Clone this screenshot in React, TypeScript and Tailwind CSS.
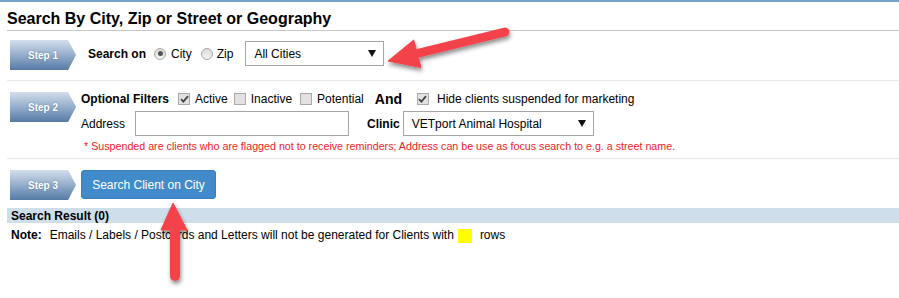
import type { ReactNode } from 'react';

function StepBadge({ label }: { label: string }) {
  return (
    <div
      className="w-[66px] h-[30px] shrink-0 flex items-center justify-center bg-gradient-to-b from-[#d3deeb] via-[#95aecb] to-[#5679a5] text-[10px] font-bold text-white [text-shadow:0_0_2px_rgba(40,70,110,0.5)]"
      style={{ clipPath: 'polygon(0 0, 88% 0, 100% 50%, 88% 100%, 0 100%)' }}
    >
      {label}
    </div>
  );
}

function Radio({ checked }: { checked?: boolean }) {
  return (
    <span className="w-[12px] h-[12px] rounded-full border border-[#a8a8a8] bg-gradient-to-b from-[#dcdcdc] to-[#f2f2f2] flex items-center justify-center shrink-0">
      {checked && <span className="w-[5px] h-[5px] rounded-full bg-[#555]" />}
    </span>
  );
}

function Check({ checked }: { checked?: boolean }) {
  return (
    <span className="w-[12px] h-[12px] border border-[#a9a9a9] bg-[#e2e2e2] flex items-center justify-center shrink-0">
      {checked && (
        <svg width="9" height="8" viewBox="0 0 9 8">
          <path d="M1 4.2 L3.4 6.6 L8 1.2" stroke="#444" strokeWidth="1.8" fill="none" />
        </svg>
      )}
    </span>
  );
}

function SelectBox({ width, text }: { width: string; text: string }) {
  return (
    <div className={`${width} h-[25px] border border-[#a6a6a6] bg-white flex items-center justify-between pl-[8px] pr-[7px] text-[12px] text-black`}>
      <span>{text}</span>
      <svg width="8" height="7" viewBox="0 0 8 7">
        <path d="M0 0 H8 L4 7 Z" fill="#111" />
      </svg>
    </div>
  );
}

function Row({ children, className }: { children: ReactNode; className?: string }) {
  return <div className={`flex items-start pl-[10px] ${className ?? ''}`}>{children}</div>;
}

export default function App() {
  return (
    <div className="relative w-[899px] h-[298px] bg-white overflow-hidden text-black font-['Liberation_Sans',Arial,sans-serif]">
      <div className="border-t-2 border-[#78a4ca]">
        {/* Title */}
        <div className="pt-[8px] pl-[7px]">
          <div className="pb-[2px] border-b border-[#c8c8c8]">
            <h1 className="text-[16px] leading-[18px] font-bold">Search By City, Zip or Street or Geography</h1>
          </div>
        </div>

        {/* Step 1 */}
        <Row className="pt-[9px] pb-[10px]">
          <StepBadge label="Step 1" />
          <div className="ml-[12px] mt-[1px] h-[25px] flex items-center text-[12px]">
            <span className="font-semibold">Search on</span>
            <span className="ml-[8px]"><Radio checked /></span>
            <span className="ml-[5px]">City</span>
            <span className="ml-[9px]"><Radio /></span>
            <span className="ml-[4px]">Zip</span>
            <div className="ml-[12px]">
              <SelectBox width="w-[139px]" text="All Cities" />
            </div>
          </div>
        </Row>

        <div className="ml-[7px] border-t border-[#e8e8e8]" />

        {/* Step 2 */}
        <Row>
          <div className="mt-[11px]">
            <StepBadge label="Step 2" />
          </div>
          <div className="ml-[5px] pt-[10px] pb-[5px] text-[12px]">
            <div className="h-[16px] flex items-center">
              <span className="font-semibold">Optional Filters</span>
              <span className="ml-[9px]"><Check checked /></span>
              <span className="ml-[5px]">Active</span>
              <span className="ml-[6px]"><Check /></span>
              <span className="ml-[5px]">Inactive</span>
              <span className="ml-[8px]"><Check /></span>
              <span className="ml-[5px]">Potential</span>
              <span className="ml-[11px] text-[14px] font-bold">And</span>
              <span className="ml-[15px]"><Check checked /></span>
              <span className="ml-[8px]">Hide clients suspended for marketing</span>
            </div>
            <div className="mt-[4px] h-[25px] flex items-center">
              <span>Address</span>
              <input className="ml-[10px] w-[214px] h-[25px] border border-[#a6a6a6] outline-none" />
              <span className="ml-[18px] font-semibold">Clinic</span>
              <div className="ml-[3px]">
                <SelectBox width="w-[191px]" text="VETport Animal Hospital" />
              </div>
            </div>
            <p className="mt-[3px] ml-[3px] h-[14px] leading-[14px] text-[10.7px] text-[#ee1c25]">
              * Suspended are clients who are flagged not to receive reminders; Address can be use as focus search to e.g. a street name.
            </p>
          </div>
        </Row>

        <div className="ml-[7px] border-t border-[#e8e8e8]" />

        {/* Step 3 */}
        <Row className="pt-[11px] pb-[8px]">
          <StepBadge label="Step 3" />
          <button className="ml-[5px] w-[135px] h-[29px] rounded-[3px] bg-[#428bca] border border-[#3a7fba] text-white text-[12px]">
            Search Client on City
          </button>
        </Row>

        {/* Result */}
        <div className="ml-[7px] h-[15px] bg-[#cfdeeb] pl-[4px] flex items-center text-[12px] font-bold">
          Search Result (0)
        </div>
        <div className="pl-[11px] pt-[5px] flex items-center text-[12px] leading-[15px]">
          <span className="font-bold">Note:</span>
          <span className="ml-[8px]">Emails / Labels / Postcards and Letters will not be generated for Clients with</span>
          <span className="ml-[4px] w-[14px] h-[14px] bg-[#ffff00]" />
          <span className="ml-[8px]">rows</span>
        </div>
      </div>

      {/* Annotation arrows */}
      <svg className="absolute inset-0 pointer-events-none" width="899" height="298" viewBox="0 0 899 298">
        <defs>
          <filter id="sh" x="-20%" y="-20%" width="140%" height="140%">
            <feDropShadow dx="1" dy="3" stdDeviation="2" floodColor="#000" floodOpacity="0.45" />
          </filter>
        </defs>
        <g filter="url(#sh)" fill="#f4434b" stroke="#f4434b">
          <line x1="505" y1="32" x2="415" y2="54" strokeWidth="9" strokeLinecap="round" />
          <polygon points="388,61 413.7,40 421,67.5" strokeWidth="1" strokeLinejoin="round" />
          <line x1="175" y1="226" x2="175" y2="276" strokeWidth="10" strokeLinecap="round" />
          <polygon points="173,203 161,230 187,230" strokeWidth="1" strokeLinejoin="round" />
        </g>
      </svg>
    </div>
  );
}
